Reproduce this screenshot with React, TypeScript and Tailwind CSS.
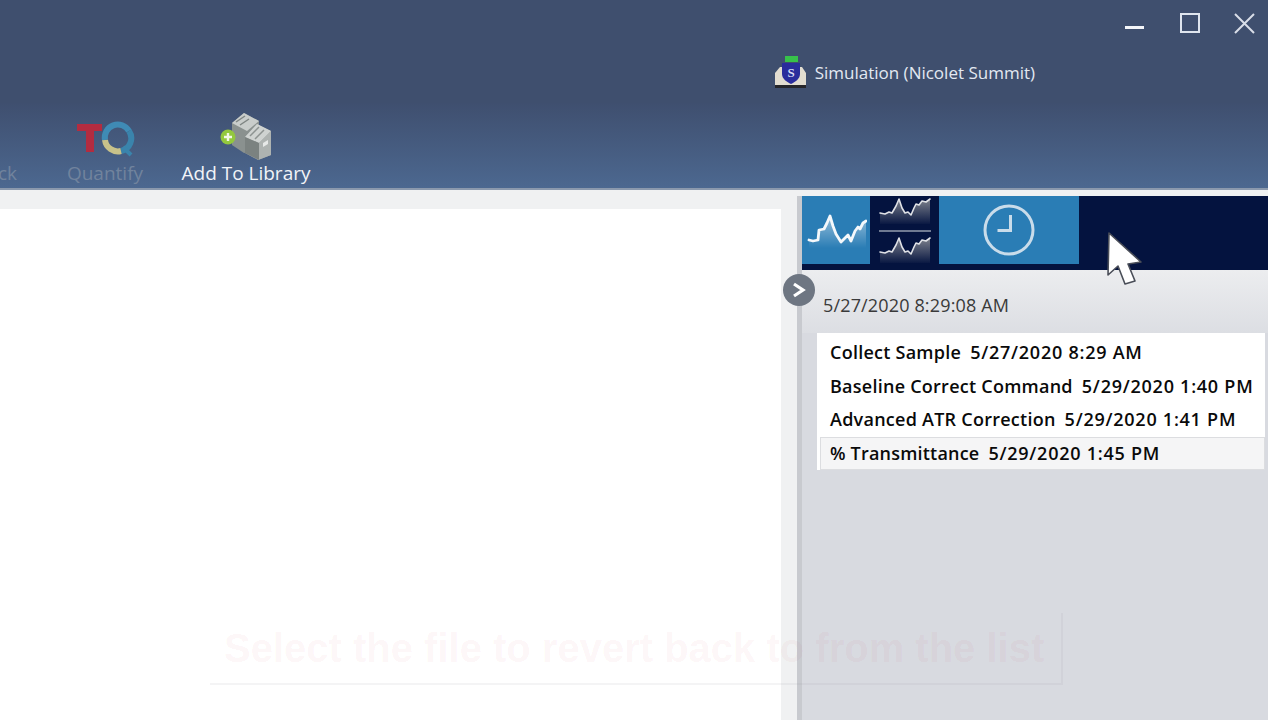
const font = "font-['Open_Sans','Noto_Sans',sans-serif]";

function SparkLarge() {
  const line = "M2 26 L6 27 L11 26 L12 16 L17 15 L20 9 L23 2 L26 12 L29 20 L34 28 L38 24 L41 21 L44 27 L48 17 L51 13 L53 15 L56 9 L59 7";
  return (
    <svg width="60" height="34" viewBox="0 0 60 34" fill="none">
      <defs>
        <linearGradient id="sparkLarge" x1="0" y1="0" x2="0" y2="1">
          <stop offset="0" stopColor="#ffffff" stopOpacity="0.5" />
          <stop offset="1" stopColor="#ffffff" stopOpacity="0" />
        </linearGradient>
      </defs>
      <path d={`${line} L59 34 L2 34 Z`} fill="url(#sparkLarge)" />
      <path d={line} stroke="#f4f8fb" strokeWidth="2.8" strokeLinejoin="round" strokeLinecap="round" />
    </svg>
  );
}

function SparkSmall() {
  const line = "M1 15 L6 16 L10 14 L13 15 L17 8 L20 1 L23 10 L26 15 L29 14 L32 17 L35 10 L37 6 L40 7 L43 3 L47 4 L51 1";
  return (
    <svg width="52" height="26" viewBox="0 0 52 26" fill="none">
      <defs>
        <linearGradient id="sparkSmall" x1="0" y1="0" x2="0" y2="1">
          <stop offset="0" stopColor="#7d818c" />
          <stop offset="1" stopColor="#7d818c" stopOpacity="0.05" />
        </linearGradient>
      </defs>
      <path d={`${line} L51 26 L1 26 Z`} fill="url(#sparkSmall)" />
      <path d={line} stroke="#dfe1e6" strokeWidth="1.6" strokeLinejoin="round" strokeLinecap="round" />
    </svg>
  );
}

function ShieldIcon() {
  return (
    <svg width="32" height="34" viewBox="0 0 32 34">
      <rect x="10" y="1" width="13" height="6" fill="#37c24a" />
      <path d="M5 12 H27 L31 18 V31 H0 V18 Z" fill="#e2ddd0" />
      <rect x="0" y="30" width="31" height="3" fill="#26262a" />
      <path d="M7 8 H25 V19 C25 24 20 27 16 29 C12 27 7 24 7 19 Z" fill="#2a2c9c" />
      <text x="16" y="22" textAnchor="middle" fontSize="13" fontFamily="Liberation Serif, serif" fontWeight="700" fill="#d8dcf5">S</text>
    </svg>
  );
}

function QuantifyIcon() {
  return (
    <svg width="60" height="38" viewBox="0 2 60 38">
      <path d="M2 6 H27 V13 H19 V34 H11 V13 H2 Z" fill="#b32c40" />
      <path d="M30 22 A13 13 0 0 1 54 13" fill="none" stroke="#3f8bb5" strokeWidth="6" />
      <path d="M54 13 A13 13 0 0 1 46 33" fill="none" stroke="#3a84ac" strokeWidth="6" />
      <path d="M46 33 A13 13 0 0 1 30 22" fill="none" stroke="#c8c28a" strokeWidth="6" />
      <path d="M48 29 L56 37" stroke="#3a84ac" strokeWidth="4" />
    </svg>
  );
}

function LibraryIcon() {
  return (
    <svg width="56" height="50" viewBox="0 0 56 50">
      <path d="M14 12 L26 2 L41 10 L41 40 L26 42 L14 34 Z" fill="#8a918f" />
      <path d="M14 12 L26 2 L41 10 L29 20 Z" fill="#c9cdcb" />
      <path d="M18 11 L27 5 M22 14 L31 8" stroke="#7f8583" strokeWidth="1.5" />
      <path d="M27 26 L39 13 L53 20 L53 44 L40 49 L27 42 Z" fill="#a2a7a5" />
      <path d="M27 26 L39 13 L53 20 L41 32 Z" fill="#cfd3d1" />
      <path d="M32 25 L41 16 M37 28 L46 19" stroke="#8d9391" strokeWidth="1.5" />
      <path d="M41 32 L53 20 V44 L40 49 Z" fill="#aeb3b1" />
      <path d="M41 32 V49 L27 42 V26 Z" fill="#7b8280" />
      <path d="M45 32 L50 29 V33 L45 36 Z" fill="#e6e8e7" />
      <circle cx="10" cy="26" r="7.5" fill="#93c83e" />
      <path d="M10 22 V30 M6 26 H14" stroke="#f3f8e8" strokeWidth="2.4" />
    </svg>
  );
}

function Cursor() {
  return (
    <svg width="38" height="56" viewBox="0 0 38 56" className="absolute left-[1106px] top-[231px]">
      <path d="M3 2 L2 44 L12 35 L19 53 L29 50 L22 33 L35 31 Z" fill="#ffffff" stroke="#4a4e58" strokeWidth="1.6" strokeLinejoin="round" />
    </svg>
  );
}

export default function App() {
  const history = [
    { name: "Collect Sample", date: "5/27/2020 8:29 AM" },
    { name: "Baseline Correct Command", date: "5/29/2020 1:40 PM" },
    { name: "Advanced ATR Correction", date: "5/29/2020 1:41 PM" },
  ];

  return (
    <div className={`${font} relative w-[1268px] h-[720px] overflow-hidden flex flex-col bg-white`}>
      {/* title bar */}
      <div className="h-[103px] bg-[#3f4f6e] flex flex-col items-end shrink-0">
        <div className="flex items-center h-[46px]">
          <div className="w-[19px] h-[3px] mt-[8px] bg-[#f4f6fa] mr-[36px]" />
          <div className="w-[20px] h-[20px] border-2 border-[#dfe5ee] mr-[34px]" />
          <svg width="21" height="21" viewBox="0 0 21 21" className="mr-[13px]" stroke="#d9dee8" strokeWidth="2">
            <path d="M1 1 L20 20 M20 1 L1 20" />
          </svg>
        </div>
        <div className="flex items-center mr-[233px] mt-[9px]">
          <ShieldIcon />
          <span className="ml-[8px] text-[17px] leading-[23px] text-[#e3e9f2]">Simulation (Nicolet Summit)</span>
        </div>
      </div>

      {/* toolbar */}
      <div className="h-[87px] shrink-0 bg-gradient-to-b from-[#3f4f6f] to-[#4c6890] border-b-2 border-[#8b99ad] flex items-end">
        <div className="w-[17px] shrink-0 overflow-hidden flex justify-end">
          <span className="text-[19px] leading-[25px] pb-[2px] text-[#71839d]">ck</span>
        </div>
        <div className="ml-[50px] flex flex-col items-center w-[76px]">
          <div className="mb-[3px]">
            <QuantifyIcon />
          </div>
          <span className="text-[19px] leading-[25px] pb-[2px] text-[#71839d] whitespace-nowrap">Quantify</span>
        </div>
        <div className="ml-[38px] flex flex-col items-center w-[130px]">
          <LibraryIcon />
          <span className="text-[19px] leading-[25px] pb-[2px] text-[#f1f4f8] whitespace-nowrap">Add To Library</span>
        </div>
      </div>

      {/* main */}
      <div className="flex-1 flex min-h-0 bg-[#f0f1f2]">
        <div className="w-[781px] shrink-0 pt-[19px] flex">
          <div className="flex-1 bg-white" />
        </div>
        <div className="flex-1 flex flex-col min-w-0 pt-[6px] pl-[16px]">
          <div className="flex-1 bg-[#d8dae0] border-l-[5px] border-[#c8cacf] flex flex-col min-w-0">
            <div className="h-[74px] bg-[#04133f] shrink-0 flex items-start">
              <div className="w-[68px] h-[68px] bg-[#2a7db5] flex items-center justify-center pl-[2px] pt-[2px]">
                <SparkLarge />
              </div>
              <div className="w-[69px] h-[68px] flex flex-col items-center pt-[2px]">
                <SparkSmall />
                <div className="w-[52px] h-[2px] bg-[#6f7a92] mt-[6px] mb-[5px]" />
                <SparkSmall />
              </div>
              <div className="w-[140px] h-[68px] bg-[#2a7db5] flex items-center justify-center">
                <svg width="52" height="52" viewBox="0 0 52 52" fill="none" stroke="#c9dcea" strokeWidth="3">
                  <circle cx="26" cy="26" r="24" />
                  <path d="M27.5 11 V26.5 H14.5" />
                </svg>
              </div>
            </div>
            <div className="h-[63px] shrink-0 bg-gradient-to-b from-[#ecedef] to-[#dcdee3] pl-[21px] pt-[24px] text-[18px] leading-[23px] tracking-[0.15px] text-[#3a3a3a]">
              5/27/2020 8:29:08 AM
            </div>
            <div className="ml-[15px] mr-[3px] h-[137px] bg-white flex flex-col pt-[3px] text-[18px] font-semibold text-[#0a0a0a]">
              {history.map((h) => (
                <div key={h.name} className="h-[33.5px] flex items-center pl-[13px] gap-[9px] whitespace-nowrap">
                  <span className="tracking-[0.25px]">{h.name}</span>
                  <span className="tracking-[0.75px]">{h.date}</span>
                </div>
              ))}
              <div className="h-[33px] ml-[3px] flex items-center pl-[9px] gap-[9px] whitespace-nowrap bg-[#f5f5f6] border border-[#dcdde0]">
                <span className="tracking-[0.2px]">% Transmittance</span>
                <span className="tracking-[0.75px]">5/29/2020 1:45 PM</span>
              </div>
            </div>
          </div>
        </div>
      </div>

      {/* collapse button, cursor and fading caption sit over the page */}
      <div className="absolute left-[783px] top-[274px] w-[32px] h-[32px] rounded-full bg-[#6e7682] flex items-center justify-center">
        <svg width="16" height="18" viewBox="0 0 16 18" fill="none" stroke="#ffffff" strokeWidth="3.2">
          <path d="M3 3 L12 9 L3 15" />
        </svg>
      </div>
      <Cursor />
      <div className="absolute left-[210px] top-[613px] w-[853px] h-[72px] border-r-2 border-b-2 border-[#8f919a]/10 flex items-center pl-[14px] font-['Liberation_Sans',sans-serif] text-[40px] font-bold text-[#c41230]/[0.05] whitespace-nowrap">
        Select the file to revert back to from the list
      </div>
    </div>
  );
}
